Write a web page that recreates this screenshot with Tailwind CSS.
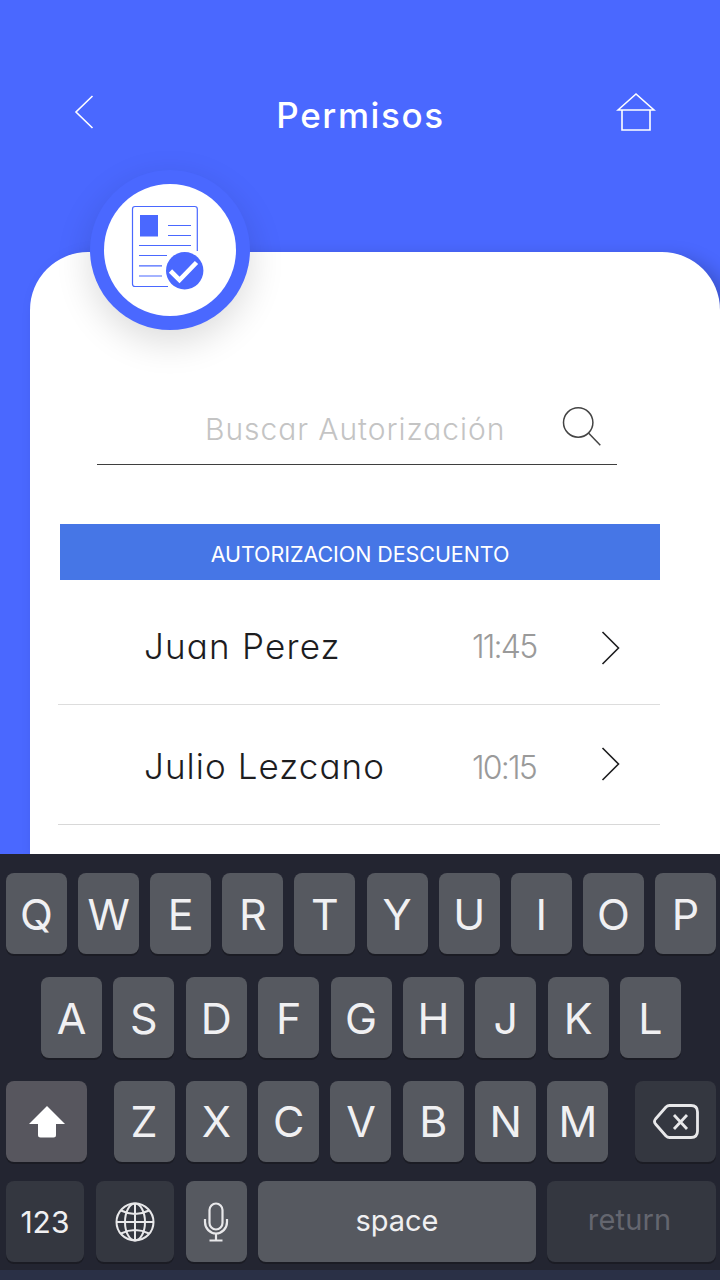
<!DOCTYPE html>
<html lang="es">

<head>
    <meta charset="UTF-8" />
    <title>Permisos</title>
    <script src="https://cdn.jsdelivr.net/npm/@tailwindcss/browser@4"></script>
</head>

<body class="w-[720px] h-[1280px] overflow-hidden bg-[#4a68ff] font-['Inter','Noto_Sans',sans-serif]">
    <div class="h-[854px] flex flex-col overflow-hidden [font-feature-settings:'cv11']">
        <header class="h-[252px] shrink-0 flex items-start justify-between pl-[74px] pr-[64px] pt-[92px] text-white">
            <svg class="w-[22px] h-[40px]" viewBox="0 0 22 40" fill="none" stroke="currentColor" stroke-width="1.6">
                <path d="M18.5 4 L2 20 L18.5 36" />
            </svg>
            <h1 class="mt-[3px] pl-[9px] text-[35px] leading-[40px] font-medium tracking-[1.6px]">Permisos</h1>
            <svg class="w-[40px] h-[40px]" viewBox="0 0 40 40" fill="none" stroke="currentColor" stroke-width="1.6">
                <path d="M2 18 L20 2 L38 18 Z M6 18 V38 H34 V18" />
            </svg>
        </header>

        <main class="relative ml-[30px] h-[602px] rounded-t-[58px] bg-white px-[30px] pt-[148px] shadow-[10px_6px_18px_rgba(0,0,0,0.22)]">
            <!-- insignia -->
            <div class="absolute left-[60px] top-[-82px] w-[160px] h-[160px] rounded-full bg-[#4a68ff] flex items-center justify-center shadow-[0_12px_36px_rgba(0,0,0,0.14)]">
                <div class="w-[132px] h-[132px] rounded-full bg-white">
                    <svg class="w-[132px] h-[132px]" viewBox="104 184 132 132" fill="none" stroke="#4a68ff" stroke-width="1.2">
                        <path d="M197.3 251 V209 Q197.3 206.5 194.8 206.5 H135 Q132.5 206.5 132.5 209 V284 Q132.5 286.5 135 286.5 H168" />
                        <path d="M168 225.500 H191 M168 235.500 H191 M139 245.500 H191 M139 255.500 H167 M139 265.800 H162 M139 276 H162" />
                        <rect x="140" y="215" width="18" height="21.5" fill="#4a68ff" stroke="none" />
                        <circle cx="184.7" cy="270.7" r="18.7" fill="#4a68ff" stroke="none" />
                        <path d="M170.5 271 L179.5 280 L196.5 262.5" stroke="#fff" stroke-width="4.6" />
                    </svg>
                </div>
            </div>

            <!-- buscador -->
            <div class="ml-[37px] w-[520px] h-[65px] flex items-start border-b border-[#3f3f3f] pl-[108px]">
                <div class="mt-[9px] w-[355px] text-[30px] leading-[40px] font-light tracking-[0.95px] whitespace-nowrap text-[#c4c4c4]">Buscar Autorización</div>
                <svg class="mt-[4px] w-[44px] h-[44px] shrink-0" viewBox="560 404 44 44" fill="none" stroke="#444" stroke-width="1.5">
                    <circle cx="578.2" cy="422.5" r="14.7" />
                    <path d="M588.5 433 L600.3 445.3" />
                </svg>
            </div>

            <div class="mt-[59px] w-[600px] h-[56px] bg-[#4676e6] flex items-center justify-center pt-[4px] text-[21.5px] tracking-[-0.07px] text-white whitespace-nowrap">AUTORIZACION DESCUENTO</div>

            <ul class="-ml-[2px] w-[602px] text-[#1d1d1f]">
                <li class="h-[125px] flex items-center border-b border-[#dddddd] pl-[86px]">
                    <span class="w-[328px] pt-[8px] text-[35px] leading-[40px] font-light tracking-[1.2px]">Juan Perez</span>
                    <span class="w-[129px] pt-[10px] text-[32px] leading-[40px] font-light tracking-[-1.8px] text-[#9a9a9a]">11:45</span>
                    <svg class="mt-[12px] w-[20px] h-[36px]" viewBox="0 0 20 36" fill="none" stroke="currentColor" stroke-width="1.6">
                        <path d="M1.5 2 L17.5 18 L1.5 34" />
                    </svg>
                </li>
                <li class="h-[120px] flex items-center border-b border-[#d8d8d8] pl-[86px]">
                    <span class="w-[328px] pt-[3px] text-[35px] leading-[40px] font-light tracking-[1.05px]">Julio Lezcano</span>
                    <span class="w-[129px] pt-[6px] text-[32px] leading-[40px] font-light tracking-[-1.8px] text-[#9a9a9a]">10:15</span>
                    <svg class="mb-[1px] w-[20px] h-[36px]" viewBox="0 0 20 36" fill="none" stroke="currentColor" stroke-width="1.6">
                        <path d="M1.5 2 L17.5 18 L1.5 34" />
                    </svg>
                </li>
            </ul>
        </main>
    </div>

    <!-- teclado -->
    <div class="h-[426px] bg-[#232531] border-b-[10px] border-[#2a3046] pt-[19px] pl-[6px] pr-[4px] text-[#f0f0f2] text-[43px]">
        <div class="h-[81px] flex justify-between *:w-[61px] *:flex *:items-center *:justify-center *:rounded-[8px] *:bg-[#565960] *:shadow-[0_2px_0_#1b1c24] *:pt-px">
            <div>Q</div>
            <div>W</div>
            <div>E</div>
            <div>R</div>
            <div>T</div>
            <div>Y</div>
            <div>U</div>
            <div>I</div>
            <div>O</div>
            <div>P</div>
        </div>
        <div class="mt-[23px] h-[81px] px-[35px] flex justify-between *:w-[61px] *:flex *:items-center *:justify-center *:rounded-[8px] *:bg-[#565960] *:shadow-[0_2px_0_#1b1c24] *:pt-px">
            <div>A</div>
            <div>S</div>
            <div>D</div>
            <div>F</div>
            <div>G</div>
            <div>H</div>
            <div>J</div>
            <div>K</div>
            <div>L</div>
        </div>
        <div class="mt-[23px] h-[81px] flex justify-between">
            <div class="w-[81px] rounded-[8px] bg-[#57565e] shadow-[0_2px_0_#1b1c24] flex items-center justify-center">
                <svg class="w-[40px] h-[36px]" viewBox="0 0 40 36" fill="#fff">
                    <path d="M20 2 L38 20 H29 V31 Q29 33.5 26.5 33.5 H13.5 Q11 33.5 11 31 V20 H2 Z" />
                </svg>
            </div>
            <div class="w-[495px] flex justify-between *:w-[61px] *:flex *:items-center *:justify-center *:rounded-[8px] *:bg-[#565960] *:shadow-[0_2px_0_#1b1c24]">
                <div>Z</div>
                <div>X</div>
                <div>C</div>
                <div>V</div>
                <div>B</div>
                <div>N</div>
                <div>M</div>
            </div>
            <div class="w-[81px] rounded-[8px] bg-[#343740] shadow-[0_2px_0_#1b1c24] flex items-center justify-center">
                <svg class="mb-[2px] w-[48px] h-[38px]" viewBox="0 0 48 38" fill="none" stroke="#e8e8ea" stroke-width="2.8" stroke-linejoin="round">
                    <path d="M17.5 3.5 H39 Q45.5 3.5 45.5 10 V29 Q45.5 35.5 39 35.5 H17.5 Q15.5 35.5 14 34 L3.5 22 Q1.5 19.5 3.5 17 L14 5 Q15.5 3.5 17.5 3.5 Z" />
                    <path d="M22 13 L35 27 M35 13 L22 27" />
                </svg>
            </div>
        </div>
        <div class="mt-[19px] h-[81px] flex text-[29px] *:rounded-[8px] *:shadow-[0_2px_0_#1b1c24] *:flex *:items-center *:justify-center">
            <div class="w-[78px] bg-[#343740] text-[30px] pt-px">123</div>
            <div class="ml-[12px] w-[78px] bg-[#343740]">
                <svg class="w-[42px] h-[42px]" viewBox="0 0 42 42" fill="none" stroke="#e8e8ea" stroke-width="2">
                    <circle cx="21" cy="21" r="18.5" />
                    <ellipse cx="21" cy="21" rx="10" ry="18.5" />
                    <path d="M21 2.500 V39.500 M2.500 21 H39.500 M7 9.500 Q21 16.500 35 9.500 M7 32.500 Q21 25.500 35 32.500" />
                </svg>
            </div>
            <div class="ml-[12px] w-[61px] bg-[#565960]">
                <svg class="w-[28px] h-[42px]" viewBox="0 0 28 42" fill="none" stroke="#e8e8ea" stroke-width="2.2">
                    <rect x="7.5" y="2.5" width="13" height="26" rx="6.5" />
                    <path d="M3 18 V21 A11 11.5 0 0 0 25 21 V18 M14 32 V39 M7.5 39.500 H20.500" />
                </svg>
            </div>
            <div class="ml-[11px] w-[279px] bg-[#565960] pb-[2px]">space</div>
            <div class="ml-[11px] w-[169px] bg-[#343740] text-[#64666f] tracking-[0.2px] pb-[3px] pr-[4px]">return</div>
        </div>
    </div>
</body>

</html>
